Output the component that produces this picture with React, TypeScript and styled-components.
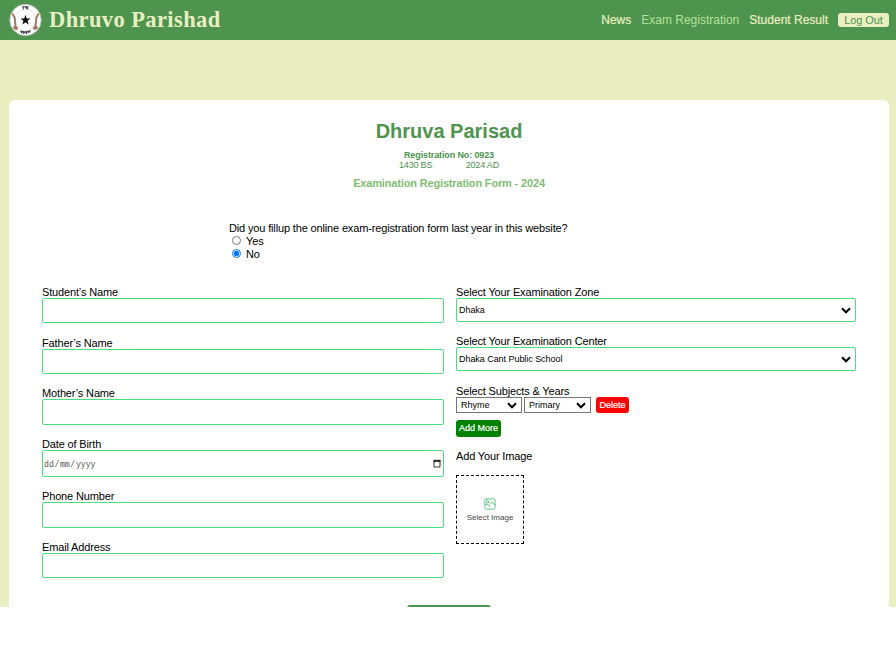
import React from "react";
import styled, { createGlobalStyle } from "styled-components";

const green = "#4e944f";
const cream = "#e9efc0";

const GlobalStyle = createGlobalStyle`
  * { box-sizing: border-box; }
  body { margin: 0; background: #fff; color: #000; font-family: "Liberation Sans", Arial, sans-serif; font-size: 11px; }
`;

const Page = styled.div`
  height: 607px;
  overflow: hidden;
  background: ${cream};
`;

const Header = styled.header`
  height: 40px;
  padding: 0 7px 0 9px;
  display: flex;
  align-items: center;
  justify-content: space-between;
  background: ${green};
`;

const Brand = styled.div`
  display: flex;
  align-items: center;
  gap: 7px;
  color: ${cream};
  font: bold 22.5px/40px "Liberation Serif", "Times New Roman", serif;
  letter-spacing: 0.4px;
  svg { display: block; }
`;

const Nav = styled.nav`
  display: flex;
  align-items: center;
  gap: 10px;
`;

const NavItem = styled.a<{ $active?: boolean }>`
  font-size: 12px;
  line-height: 14px;
  white-space: nowrap;
  color: ${(p) => (p.$active ? "#b4e197" : cream)};
  -webkit-text-stroke: ${(p) => (p.$active ? "0" : "0.2px")};
`;

const LogOut = styled.button`
  width: 51px;
  height: 14px;
  padding: 0;
  border: 0;
  border-radius: 3px;
  background: ${cream};
  color: ${green};
  font: 11px/14px "Liberation Sans", Arial, sans-serif;
  letter-spacing: -0.1px;
`;

const Card = styled.main`
  margin: 60px 7px 0 9px;
  padding: 20px 33px 0;
  height: 540px;
  border-radius: 6px;
  background: #fff;
`;

const Heading = styled.div`
  display: flex;
  flex-direction: column;
  align-items: center;
  color: ${green};
`;

const Title = styled.h1`
  margin: 0;
  font-size: 20px;
  line-height: 22px;
`;

const RegNo = styled.div`
  margin-top: 8px;
  font-size: 9px;
  font-weight: bold;
  line-height: 10px;
  letter-spacing: -0.12px;
`;

const Years = styled.div`
  display: flex;
  justify-content: space-between;
  width: 100px;
  font-size: 9px;
  line-height: 10px;
  letter-spacing: -0.18px;
`;

const FormName = styled.div`
  margin-top: 7px;
  font-size: 11px;
  font-weight: bold;
  line-height: 12px;
  letter-spacing: -0.16px;
  color: #83bd75;
`;

const Question = styled.div`
  margin: 33px 0 0 187px;
  line-height: 13px;
  letter-spacing: -0.15px;
`;

const Option = styled.label`
  display: flex;
  align-items: center;
  height: 13px;
  input { width: 9px; height: 9px; margin: 0 5px 2px 3px; }
`;

const Columns = styled.div`
  display: grid;
  grid-template-columns: 402px 400px;
  gap: 12px;
  margin-top: 25px;
`;

const Column = styled.div`
  display: flex;
  flex-direction: column;
  align-items: stretch;
`;

const Label = styled.label`
  line-height: 12px;
  letter-spacing: -0.15px;
`;

const Field = styled.div<{ $height: number }>`
  display: flex;
  flex-direction: column;
  height: ${(p) => p.$height}px;
`;

const TextInput = styled.input<{ $height: number }>`
  width: 100%;
  height: ${(p) => p.$height}px;
  border: 1px solid #4ade80;
  border-radius: 2px;
  background: #fff;
  outline: 0;
`;

const DateInput = styled.div`
  display: flex;
  align-items: center;
  justify-content: space-between;
  height: 27px;
  padding: 0 2px 0 1px;
  border: 1px solid #4ade80;
  border-radius: 2px;
  color: #555;
  font: 8.2px "Liberation Mono", "Courier New", monospace;
  svg { display: block; margin-bottom: 1px; }
`;

const DateText = styled.span`
  display: flex;
  gap: 0.6px;
  padding-top: 2px;
`;

const SelectBox = styled.div<{ $width?: number }>`
  display: grid;
  align-items: center;
  width: ${(p) => (p.$width ? `${p.$width}px` : "100%")};
  & > * { grid-area: 1 / 1; }
  svg { justify-self: end; margin-right: 5px; pointer-events: none; }
`;

const Select = styled.select<{ $compact?: boolean }>`
  appearance: none;
  width: 100%;
  height: ${(p) => (p.$compact ? 16 : 24)}px;
  padding: 0 0 0 ${(p) => (p.$compact ? 4 : 2)}px;
  border: 1px solid ${(p) => (p.$compact ? "#767676" : "#4ade80")};
  border-radius: ${(p) => (p.$compact ? 0 : 2)}px;
  background: #fff;
  color: #000;
  font: 9px "Liberation Sans", Arial, sans-serif;
  letter-spacing: ${(p) => (p.$compact ? 0 : -0.05)}px;
`;

const SubjectRow = styled.div`
  display: flex;
  align-items: center;
  gap: 2px;
  height: 16px;
`;

const ActionButton = styled.button<{ $color: string; $width: number; $height: number }>`
  width: ${(p) => p.$width}px;
  height: ${(p) => p.$height}px;
  padding: 0;
  border: 0;
  border-radius: 3px;
  background: ${(p) => p.$color};
  color: #fff;
  font: 9px/15px "Liberation Sans", Arial, sans-serif;
  -webkit-text-stroke: 0.2px #fff;
`;

const DeleteButton = styled(ActionButton)`
  margin-left: 3px;
`;

const AddButton = styled(ActionButton)`
  margin: 7px 0 13px;
`;

const ImagePicker = styled.div`
  display: flex;
  flex-direction: column;
  align-items: center;
  justify-content: center;
  gap: 3px;
  width: 68px;
  height: 69px;
  margin-top: 13px;
  border: 1px dashed #000;
  color: #444;
  font-size: 8px;
  line-height: 9px;
  svg { display: block; }
`;

const Submit = styled.button`
  display: block;
  width: 84px;
  height: 24px;
  margin: 27px auto 0;
  border: 0;
  border-radius: 3px;
  background: ${green};
`;

const Logo = () => (
  <svg width="33" height="34" viewBox="0 0 34 35">
    <circle cx="17" cy="17.5" r="16.2" fill="#fff" stroke="#b5bdb2" strokeWidth="1" />
    <circle cx="17" cy="17.5" r="11" fill="none" stroke="#e2e2e2" strokeWidth="0.8" />
    <path d="M17 12.2l1.3 3.7 3.9.1-3.1 2.3 1.1 3.8-3.2-2.2-3.2 2.2 1.1-3.8-3.1-2.3 3.9-.1z" fill="#080808" />
    <g fill="none" stroke="#a5755f" strokeLinecap="round">
      <path d="M3.8 11.5l2 3.5 1 9.5" strokeWidth="2" />
      <path d="M30.2 11.5l-2 3.5-1 9.5" strokeWidth="2" />
      <path d="M6.2 25.6l1.3.3M27.8 25.6l-1.3.3" strokeWidth="3.6" />
    </g>
    <path d="M13.5 3.8h6.5M14.7 3.4v3.4M17 3.8l1 2.2v-2M19.3 3.4v3.4" fill="none" stroke="#444" strokeWidth="1.1" />
    <path d="M11.8 29q5 2.2 10.6-.4M13 28.6v2.4M15.2 29v2.9M18 29v2.8M20.5 28.3v2.6" fill="none" stroke="#333" strokeWidth="1.3" />
  </svg>
);

const Chevron = () => (
  <svg width="10" height="7" viewBox="0 0 10 7">
    <path d="M1 1.3l4 4 4-4" fill="none" stroke="#000" strokeWidth="2" />
  </svg>
);

const CalendarIcon = () => (
  <svg width="8" height="9" viewBox="0 0 8 9">
    <path d="M1 1.5h6v6.5h-6z" fill="none" stroke="#222" strokeWidth=".9" />
    <path d="M.7 1.2h6.6v1.5h-6.6zM2 .3v1.2M6 .3v1.2" fill="#222" stroke="#222" strokeWidth=".4" />
  </svg>
);

const ImageIcon = () => (
  <svg width="12" height="12" viewBox="0 0 12 12" fill="none" stroke="#3cb968" strokeWidth=".8" strokeLinecap="round" strokeLinejoin="round">
    <rect x=".9" y=".9" width="10.2" height="10.2" rx="1.5" />
    <circle cx="3.7" cy="3.8" r="1.1" />
    <path d="M1.2 6.2q1.9-.8 3.6 1l1.1 1.5M6.3 6.2l1.2-1.6q.8-.8 1.5 0l1.9 2.2" />
  </svg>
);

const plainFields = {
  before: [
    { label: "Student’s Name", block: 51, input: 25 },
    { label: "Father’s Name", block: 50, input: 25 },
    { label: "Mother’s Name", block: 51, input: 26 },
  ],
  after: [
    { label: "Phone Number", block: 51, input: 26 },
    { label: "Email Address", block: 37, input: 25 },
  ],
};

const PlainField = ({ label, block, input }: { label: string; block: number; input: number }) => (
  <Field $height={block}>
    <Label>{label}</Label>
    <TextInput $height={input} aria-label={label} />
  </Field>
);

const Dropdown = ({ value, width }: { value: string; width?: number }) => (
  <SelectBox $width={width}>
    <Select $compact={width !== undefined}><option>{value}</option></Select>
    <Chevron />
  </SelectBox>
);

export default function App() {
  return (
    <>
      <GlobalStyle />
      <Page>
        <Header>
          <Brand><Logo />Dhruvo Parishad</Brand>
          <Nav>
            <NavItem>News</NavItem>
            <NavItem $active>Exam Registration</NavItem>
            <NavItem>Student Result</NavItem>
            <LogOut>Log Out</LogOut>
          </Nav>
        </Header>
        <Card>
          <Heading>
            <Title>Dhruva Parisad</Title>
            <RegNo>Registration No: 0923</RegNo>
            <Years><span>1430 BS</span><span>2024 AD</span></Years>
            <FormName>Examination Registration Form - 2024</FormName>
          </Heading>
          <Question>
            <div>Did you fillup the online exam-registration form last year in this website?</div>
            <Option><input type="radio" name="previous" />Yes</Option>
            <Option><input type="radio" name="previous" defaultChecked />No</Option>
          </Question>
          <Columns>
            <Column>
              {plainFields.before.map((f) => <PlainField key={f.label} {...f} />)}
              <Field $height={52}>
                <Label>Date of Birth</Label>
                <DateInput>
                  <DateText><span>dd</span><span>/</span><span>mm</span><span>/</span><span>yyyy</span></DateText>
                  <CalendarIcon />
                </DateInput>
              </Field>
              {plainFields.after.map((f) => <PlainField key={f.label} {...f} />)}
            </Column>
            <Column>
              <Field $height={49}>
                <Label>Select Your Examination Zone</Label>
                <Dropdown value="Dhaka" />
              </Field>
              <Field $height={50}>
                <Label>Select Your Examination Center</Label>
                <Dropdown value="Dhaka Cant Public School" />
              </Field>
              <Label>Select Subjects &amp; Years</Label>
              <SubjectRow>
                <Dropdown value="Rhyme" width={66} />
                <Dropdown value="Primary" width={67} />
                <DeleteButton $color="#ff0000" $width={33} $height={16}>Delete</DeleteButton>
              </SubjectRow>
              <AddButton $color="#008000" $width={45} $height={17}>Add More</AddButton>
              <Label>Add Your Image</Label>
              <ImagePicker><ImageIcon />Select Image</ImagePicker>
            </Column>
          </Columns>
          <Submit aria-label="Submit" />
        </Card>
      </Page>
    </>
  );
}
